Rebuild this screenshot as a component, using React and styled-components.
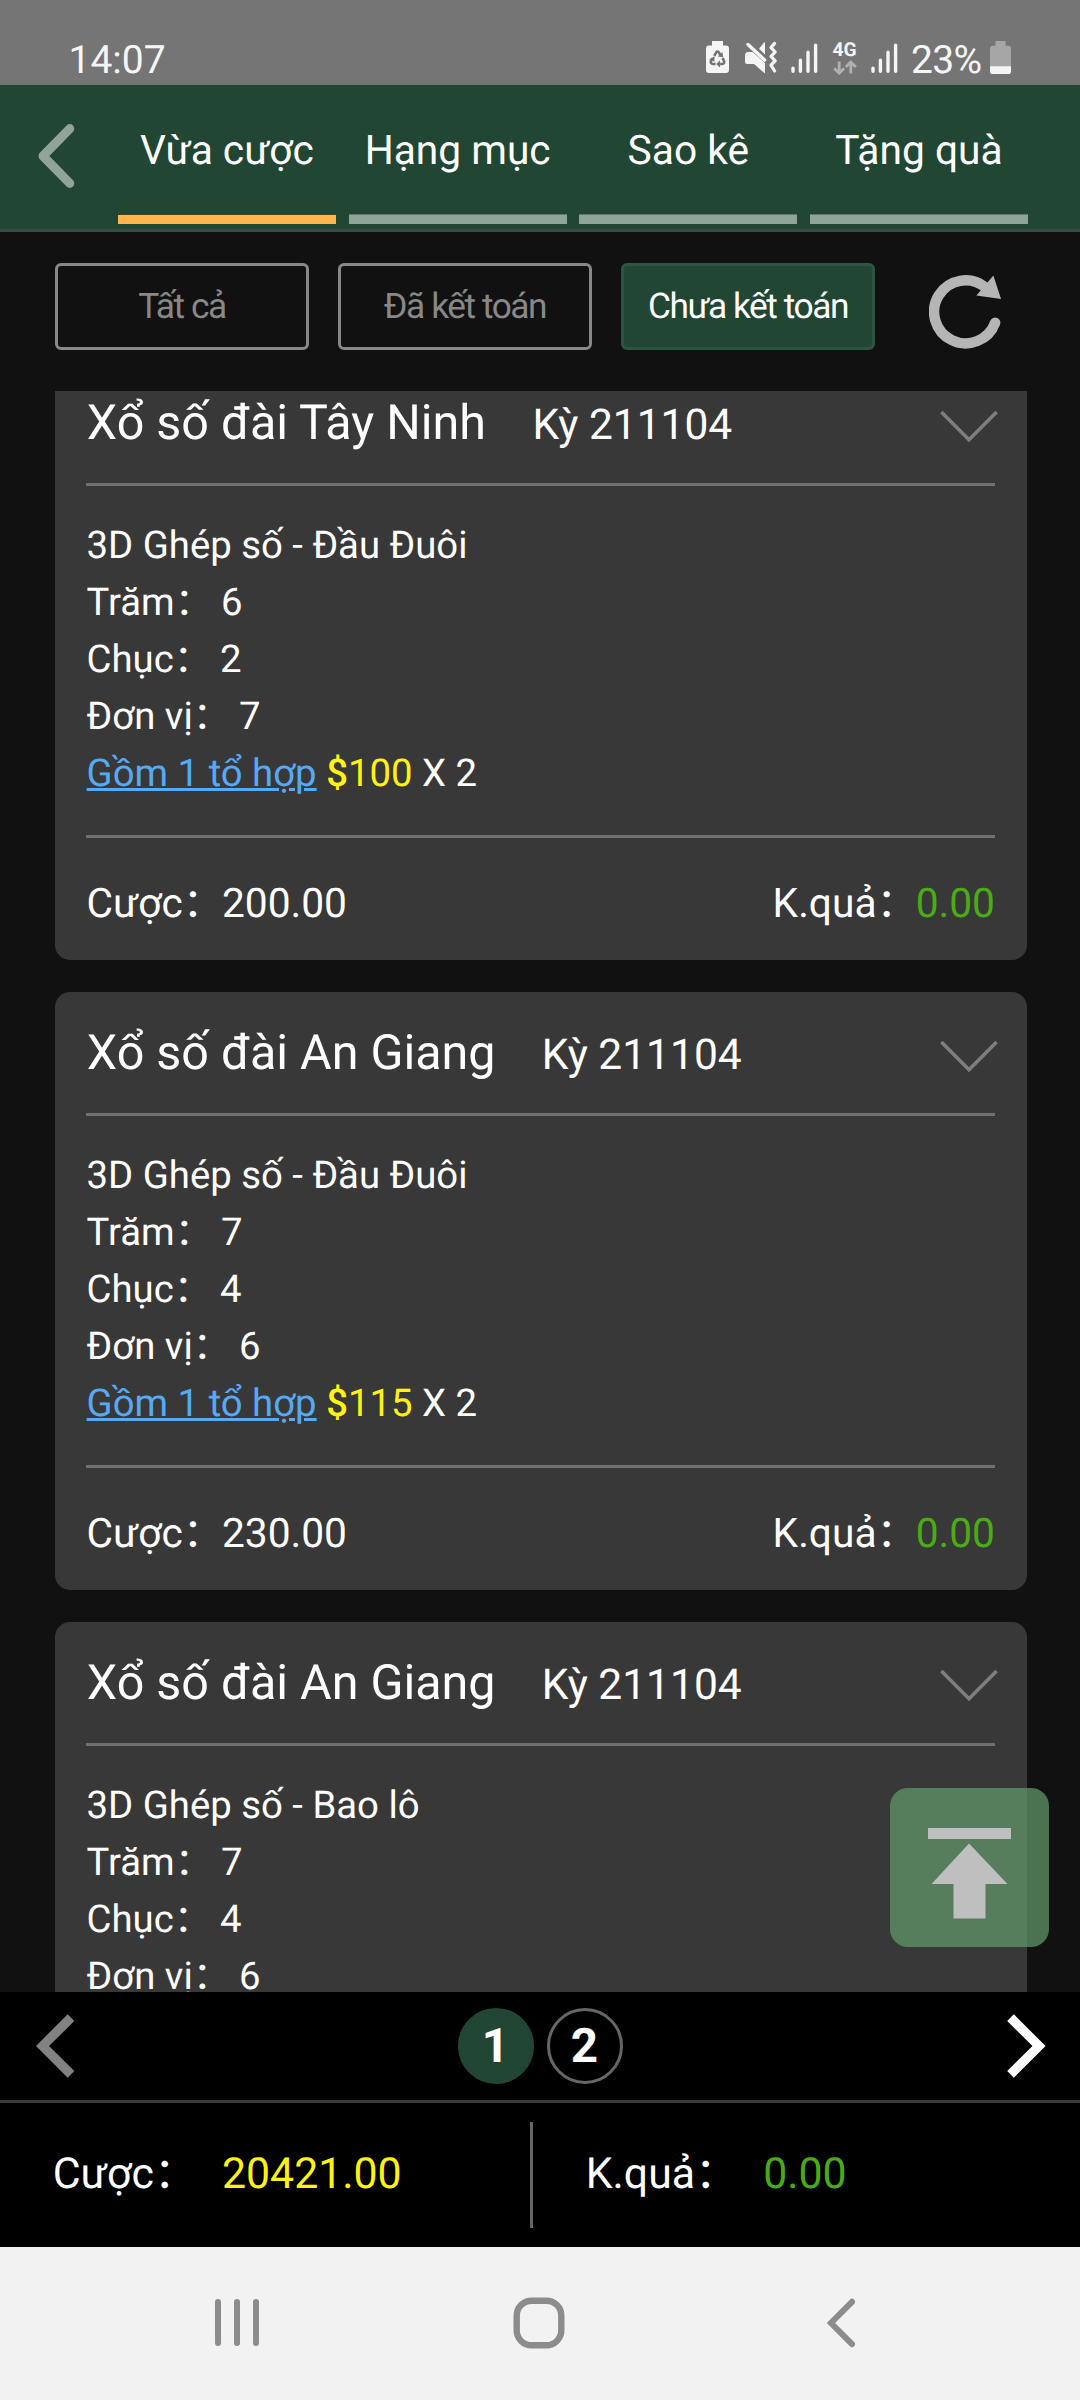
import React from 'react';
import styled, { createGlobalStyle, css } from 'styled-components';

const GlobalStyle = createGlobalStyle`
  * { box-sizing: border-box; }
  body {
    margin: 0;
    background: #111;
    font-family: Roboto, "Noto Sans CJK SC", sans-serif;
    text-rendering: geometricPrecision;
  }
`;

const Screen = styled.main`
  display: flex;
  flex-direction: column;
  width: 1080px;
  height: 2400px;
  overflow: hidden;
  position: relative;
  background: #111;
  color: #fff;
`;

/* ---------- status bar ---------- */

const StatusBar = styled.div`
  display: flex;
  justify-content: space-between;
  height: 85px;
  padding: 34px 69px 0 68.5px;
  background: #757575;
  color: #f5f5f5;
  font-size: 39px;
  line-height: 52px;
`;

const StatusIcons = styled.div`
  display: flex;
  align-items: flex-start;
`;

const StatusGlyph = styled.svg`
  display: block;
  flex: none;
  margin-top: 7px;
  margin-right: ${(p) => p.$gap || 0}px;
`;

const Network = styled.div`
  display: flex;
  flex-direction: column;
  width: 24px;
  margin: 6px 14px 0 0;
  font-size: 19.2px;
  font-weight: 700;
  line-height: 20px;
`;

const Percent = styled.span`
  letter-spacing: -0.65px;
  margin-right: 8.5px;
`;

/* ---------- header ---------- */

const Header = styled.header`
  display: flex;
  height: 147px;
  padding: 0 52px 0 38px;
  background: #214634;
  border-bottom: 3px solid #3b4a43;
`;

const BackButton = styled.div`
  width: 80px;
  padding-top: 38px;
  line-height: 0;
`;

const Tabs = styled.nav`
  display: flex;
  flex: 1;
  justify-content: space-between;
`;

const Tab = styled.div`
  width: 218px;
  height: 139px;
  text-align: center;
  font-size: 40.7px;
  line-height: 131px;
  white-space: nowrap;
  border-bottom: 9px solid ${(p) => (p.$active ? '#ffb54d' : '#90a499')};
  box-shadow: inset 0 -1px 0 ${(p) => (p.$active ? '#4b4418' : '#5d7c6c')};
`;

/* ---------- filters ---------- */

const Filters = styled.section`
  display: flex;
  gap: 29px;
  height: 159px;
  padding: 31px 0 0 55px;
`;

const Filter = styled.div`
  width: 254px;
  height: 87px;
  text-align: center;
  white-space: nowrap;
  font-size: 35.3px;
  line-height: 80.4px;
  letter-spacing: -1.45px;
  border: 3px solid #888;
  border-radius: 6px;
  color: #888;
  ${(p) => p.$active && css`
    background: #214634;
    border-color: #2c5440;
    color: #fff;
  `}
`;

const Refresh = styled.svg`
  display: block;
  margin: 12px 0 0 25px;
`;

/* ---------- bets ---------- */

const List = styled.section`
  height: 1601px;
  overflow: hidden;
  padding: 0 53px 0 55px;
`;

const Stack = styled.div`
  display: flex;
  flex-direction: column;
  gap: 32px;
  margin-top: -28.7px;
`;

const Card = styled.article`
  flex: none;
  height: 597.7px;
  padding: 0 32px 0 31px;
  border-radius: 15px;
  background: #383838;
`;

const CardHead = styled.div`
  display: flex;
  align-items: baseline;
  height: 124px;
  border-bottom: 3px solid #707070;
  line-height: 121.3px;
  white-space: nowrap;
`;

const Title = styled.span`
  font-size: 48.45px;
  margin: 0 46.4px 0 0.8px;
`;

const Period = styled.span`
  font-size: 42.5px;
`;

const Chevron = styled.svg`
  display: block;
  align-self: flex-start;
  margin: 47.6px -3px 0 auto;
`;

const CardBody = styled.div`
  height: 352px;
  padding: 30.9px 0 0 0.6px;
  border-bottom: 3px solid #707070;
  font-size: 38.3px;
  line-height: 57px;
`;

const WideColon = styled.span`
  letter-spacing: -1.6px;
`;

const Combo = styled.a`
  color: #55a9f5;
  text-decoration: underline;
  text-decoration-thickness: 3px;
  text-underline-offset: 2px;
`;

const Dollar = styled.span`
  font-weight: 500;
`;

const Stake = styled.span`
  color: #fff212;
`;

const Win = styled.span`
  color: #4aac14;
`;

const CardFoot = styled.div`
  display: flex;
  justify-content: space-between;
  padding: 8px 0 0 0.6px;
  font-size: 40.7px;
  line-height: 114.6px;
`;

/* ---------- pager ---------- */

const Pager = styled.section`
  display: flex;
  align-items: center;
  justify-content: space-between;
  height: 111px;
  padding: 0 34px 0 36px;
  background: #000;
  border-bottom: 3px solid #3a3a3a;
`;

const Pages = styled.div`
  display: flex;
  gap: 13px;
  margin-right: 2px;
`;

const Page = styled.div`
  width: 76px;
  height: 76px;
  border-radius: 50%;
  border: 3px solid ${(p) => (p.$active ? '#214634' : '#666')};
  background: ${(p) => (p.$active ? '#214634' : 'transparent')};
  text-align: center;
  font-size: 47.6px;
  font-weight: 700;
  line-height: 70px;
`;

/* ---------- totals ---------- */

const Totals = styled.section`
  display: flex;
  height: 144px;
  background: #000;
  font-size: 42.8px;
  line-height: 142.2px;
`;

const Total = styled.div`
  display: flex;
  gap: 25.3px;
  width: 530px;
  padding-left: 52.7px;
`;

const Separator = styled.div`
  width: 3px;
  height: 106px;
  margin-top: 19px;
  background: #666;
`;

/* ---------- system navigation ---------- */

const SystemNav = styled.nav`
  display: grid;
  grid-template-columns: repeat(3, 302px);
  justify-items: center;
  align-items: center;
  height: 153px;
  padding: 0 88px 1px 86px;
  background: #f2f2f2;
`;

const ToTop = styled.button`
  position: absolute;
  left: 890px;
  top: 1788px;
  width: 159px;
  height: 159px;
  padding: 0;
  border: 0;
  border-radius: 18px;
  background: rgba(98, 153, 107, 0.72);
  line-height: 0;
`;

const Signal = ({ gap }) => (
  <StatusGlyph $gap={gap} width="28" height="33" viewBox="0 0 28 33" stroke="#f5f5f5" strokeWidth="3.4" strokeLinecap="round">
    <path d="M2 27.2V30.3M9.4 19.2V30.3M17 11.2V30.3M24.6 4.2V30.3" />
  </StatusGlyph>
);

const BATTERY = 'M6 0h11v4.5h3a3 3 0 0 1 3 3V29a3 3 0 0 1-3 3H3a3 3 0 0 1-3-3V7.5a3 3 0 0 1 3-3h3z';

const StatusRow = () => (
  <StatusBar>
    <span>14:07</span>
    <StatusIcons>
      <StatusGlyph $gap={16} width="23" height="33" viewBox="0 0 23 33">
        <path d={BATTERY} fill="#f5f5f5" />
        <g fill="none" stroke="#757575" strokeWidth="2.6">
          <path d="M8.2 14.8 10.2 11.4Q11.5 9.6 12.8 11.4L14.4 14" />
          <path d="M16.4 17 18 19.8Q18.8 22.8 16.2 23H13" />
          <path d="M9.6 23H7Q4.2 22.8 5 19.8L6.4 17.4" />
        </g>
        <path d="M11.8 15.6 17.2 16.2 16.4 11zM14 19.4 10.2 23 14 26.4zM3.4 18.2 8.4 20.8 8.6 15.2z" fill="#757575" />
      </StatusGlyph>
      <StatusGlyph $gap={13.5} width="33" height="33" viewBox="0 0 33 33">
        <path d="M0 14.5Q0 11 3 11H7.6L20 22V31.6Q20 32.6 19 31.8L9 23H2Q0 23 0 21zM14 7.8 19 1.4Q20 .6 20 2V13.4z" fill="#f5f5f5" />
        <path d="M3 3.5 19.6 19" stroke="#f5f5f5" strokeWidth="3.4" strokeLinecap="round" />
        <path d="M29.6 2.4 26 6.6 30.2 11 26 15.4 30.2 19.8 26 24.2 29.6 30" fill="none" stroke="#f5f5f5" strokeWidth="3.2" strokeLinecap="round" strokeLinejoin="round" />
      </StatusGlyph>
      <Signal gap={13.5} />
      <Network>
        4G
        <svg width="24" height="15" viewBox="0 0 24 15" fill="none" stroke="#b0b0b0" strokeWidth="2.8">
          <path d="M6.2 1.5V12.5M1.2 8.2 6.2 13.2 11.2 8.2M17.8 13.5V3M12.8 7 17.8 2 22.8 7" />
        </svg>
      </Network>
      <Signal gap={12.5} />
      <Percent>23%</Percent>
      <StatusGlyph width="21" height="33" viewBox="0 0 23 32" preserveAspectRatio="none">
        <path d={BATTERY} fill="#a6a6a6" />
        <path d="M0 24.5h23V29a3 3 0 0 1-3 3H3a3 3 0 0 1-3-3z" fill="#f5f5f5" />
      </StatusGlyph>
    </StatusIcons>
  </StatusBar>
);

const TABS = ['Vừa cược', 'Hạng mục', 'Sao kê', 'Tặng quà'];
const FILTERS = ['Tất cả', 'Đã kết toán', 'Chưa kết toán'];

const BETS = [
  { name: 'Xổ số đài Tây Ninh', kind: '3D Ghép số - Đầu Đuôi', digits: ['6', '2', '7'], unit: '100', total: '200.00' },
  { name: 'Xổ số đài An Giang', kind: '3D Ghép số - Đầu Đuôi', digits: ['7', '4', '6'], unit: '115', total: '230.00' },
  { name: 'Xổ số đài An Giang', kind: '3D Ghép số - Bao lô', digits: ['7', '4', '6'], unit: '115', total: '230.00' },
];

const PLACES = ['Trăm', 'Chục', 'Đơn vị'];

const BetCard = ({ bet }) => (
  <Card>
    <CardHead>
      <Title>{bet.name}</Title>
      <Period>Kỳ 211104</Period>
      <Chevron width="58" height="34" viewBox="0 0 58 34" fill="none" stroke="#7e7e7e" strokeWidth="3.6">
        <path d="M1.4 2 29 29.8 56.6 2" />
      </Chevron>
    </CardHead>
    <CardBody>
      <div>{bet.kind}</div>
      {PLACES.map((place, i) => (
        <div key={place}>{place}<WideColon>：</WideColon> {bet.digits[i]}</div>
      ))}
      <div>
        <Combo>Gồm 1 tổ hợp</Combo>{' '}
        <Stake><Dollar>$</Dollar>{bet.unit}</Stake> X 2
      </div>
    </CardBody>
    <CardFoot>
      <span>Cược<WideColon>：</WideColon>{bet.total}</span>
      <span>K.quả<WideColon>：</WideColon><Win>0.00</Win></span>
    </CardFoot>
  </Card>
);

export default function App() {
  return (
    <Screen>
      <GlobalStyle />
      <StatusRow />
      <Header>
        <BackButton>
          <svg width="38" height="66" viewBox="0 0 38 66" fill="none" stroke="#90a499" strokeWidth="9" strokeLinecap="round" strokeLinejoin="round">
            <path d="M31.8 5.6 5 33 31.8 60.4" />
          </svg>
        </BackButton>
        <Tabs>
          {TABS.map((label, i) => (
            <Tab key={label} $active={i === 0}>{label}</Tab>
          ))}
        </Tabs>
      </Header>

      <Filters>
        {FILTERS.map((label, i) => (
          <Filter key={label} $active={i === 2}>{label}</Filter>
        ))}
        <Refresh width="73" height="74" viewBox="929 275 73 74">
          <path d="M985 287A31.5 31.5 0 1 0 995.2 322.6" fill="none" stroke="#b5b5b5" strokeWidth="10.4" />
          <circle cx="995.2" cy="322.6" r="5.2" fill="#b5b5b5" />
          <path d="M993.4 275.4 1001 299 976.4 295.6Z" fill="#b5b5b5" />
        </Refresh>
      </Filters>

      <List>
        <Stack>
          {BETS.map((bet, i) => <BetCard key={i} bet={bet} />)}
        </Stack>
      </List>

      <Pager>
        <svg width="39" height="66" viewBox="0 0 39 66" fill="none" stroke="#828282" strokeWidth="9.3">
          <path d="M35 4.6 6.5 33 35 61.4" />
        </svg>
        <Pages>
          <Page $active>1</Page>
          <Page>2</Page>
        </Pages>
        <svg width="39" height="66" viewBox="0 0 39 66" fill="none" stroke="#fff" strokeWidth="9.3">
          <path d="M3.5 4.6 32 33 3.5 61.4" />
        </svg>
      </Pager>

      <Totals>
        <Total>
          <span>Cược：</span>
          <Stake>20421.00</Stake>
        </Total>
        <Separator />
        <Total>
          <span>K.quả：</span>
          <Win>0.00</Win>
        </Total>
      </Totals>

      <SystemNav>
        <svg width="44" height="50" viewBox="0 0 44 50" stroke="#8c8c8c" strokeWidth="6" strokeLinecap="round">
          <path d="M3 4V45M22 4V45M41 4V45" />
        </svg>
        <svg width="52" height="52" viewBox="0 0 52 52" fill="none" stroke="#8c8c8c" strokeWidth="6.4">
          <rect x="3.7" y="3.7" width="44.6" height="44.6" rx="15" />
        </svg>
        <svg width="28" height="50" viewBox="0 0 28 50" fill="none" stroke="#8c8c8c" strokeWidth="6" strokeLinecap="round">
          <path d="M25 3.8 4 25 25 46.2" />
        </svg>
      </SystemNav>

      <ToTop>
        <svg width="159" height="159" viewBox="0 0 159 159" fill="#bfbfbf">
          <path d="M38 40h83v11H38zM79 55.5 117.5 96H95.5V130.5H63.5V96H41.5z" />
        </svg>
      </ToTop>
    </Screen>
  );
}
